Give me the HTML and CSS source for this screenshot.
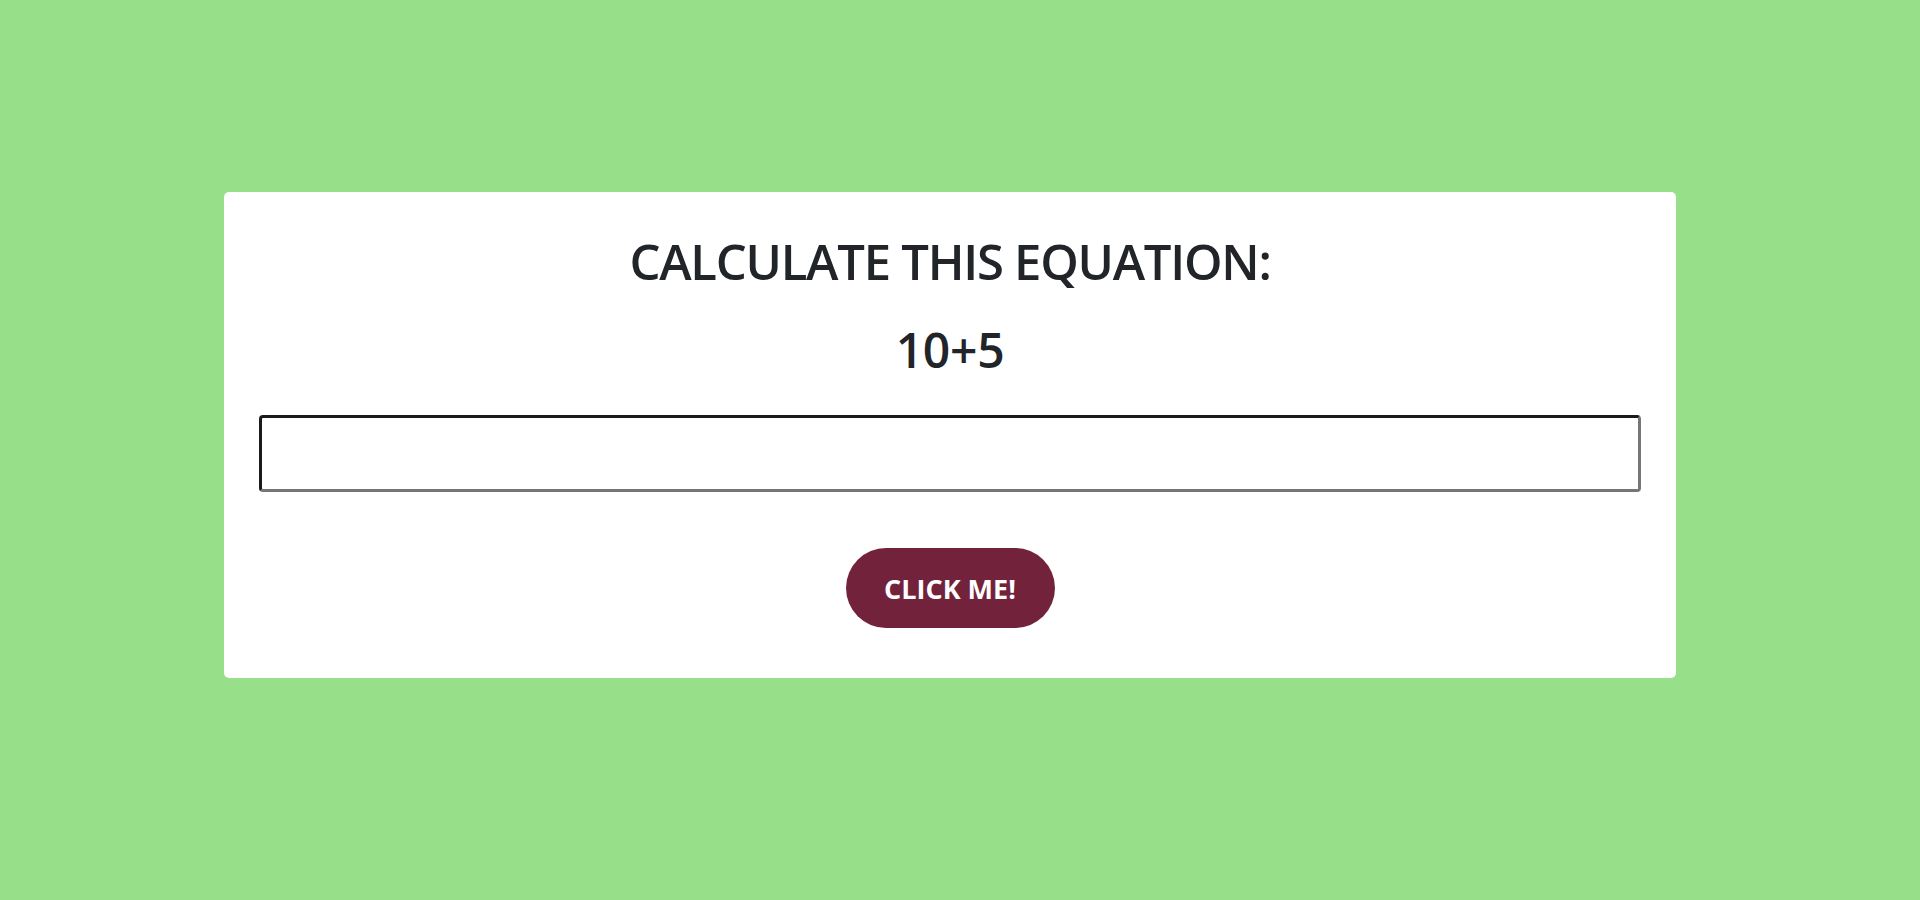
FILE: index.html
```html
<!DOCTYPE html>
<html lang="en">
<head>
<meta charset="utf-8">
<title>Calculate</title>
<link rel="stylesheet" href="styles.css">
</head>
<body>
<main class="page">
  <section class="card">
    <h1 class="title">CALCULATE THIS EQUATION:</h1>
    <h2 class="equation">10+5</h2>
    <input class="answer" type="text" aria-label="Answer">
    <button class="btn" type="button">CLICK ME!</button>
  </section>
</main>
</body>
</html>
```
FILE: styles.css
```css
html, body {
  margin: 0;
  padding: 0;
  background: #98df8a;
  font-family: "Open Sans", "Noto Sans", sans-serif;
  color: #212529;
}

.page {
  padding-top: 192px;
  padding-left: 224px;
}

.card {
  box-sizing: border-box;
  width: 1452px;
  background: #ffffff;
  border-radius: 5px;
  padding: 35px 35px 50px 35px;
  display: flex;
  flex-direction: column;
  align-items: center;
}

.title {
  margin: 4px 0 0 0;
  font-size: 49px;
  line-height: 60px;
  font-weight: 600;
  letter-spacing: -1.25px;
}

.equation {
  margin: 30px 0 0 0;
  font-size: 48px;
  line-height: 58px;
  font-weight: 600;
  letter-spacing: -0.3px;
}

.answer {
  box-sizing: border-box;
  align-self: stretch;
  margin: 36px 0 0 0;
  height: 77px;
  border-style: solid;
  border-width: 3px;
  border-color: #1b1b1b #767676 #767676 #1b1b1b;
  border-radius: 4px;
  background: #fff;
  font-size: 24px;
  padding: 0 12px;
  outline: none;
}

.btn {
  margin-top: 56px;
  width: 209px;
  height: 80px;
  border: none;
  border-radius: 40px;
  background: #73223b;
  color: #ffffff;
  font-family: "Open Sans", "Noto Sans", sans-serif;
  font-weight: 700;
  font-size: 27px;
  letter-spacing: 0;
  padding: 0;
  cursor: pointer;
}
```
